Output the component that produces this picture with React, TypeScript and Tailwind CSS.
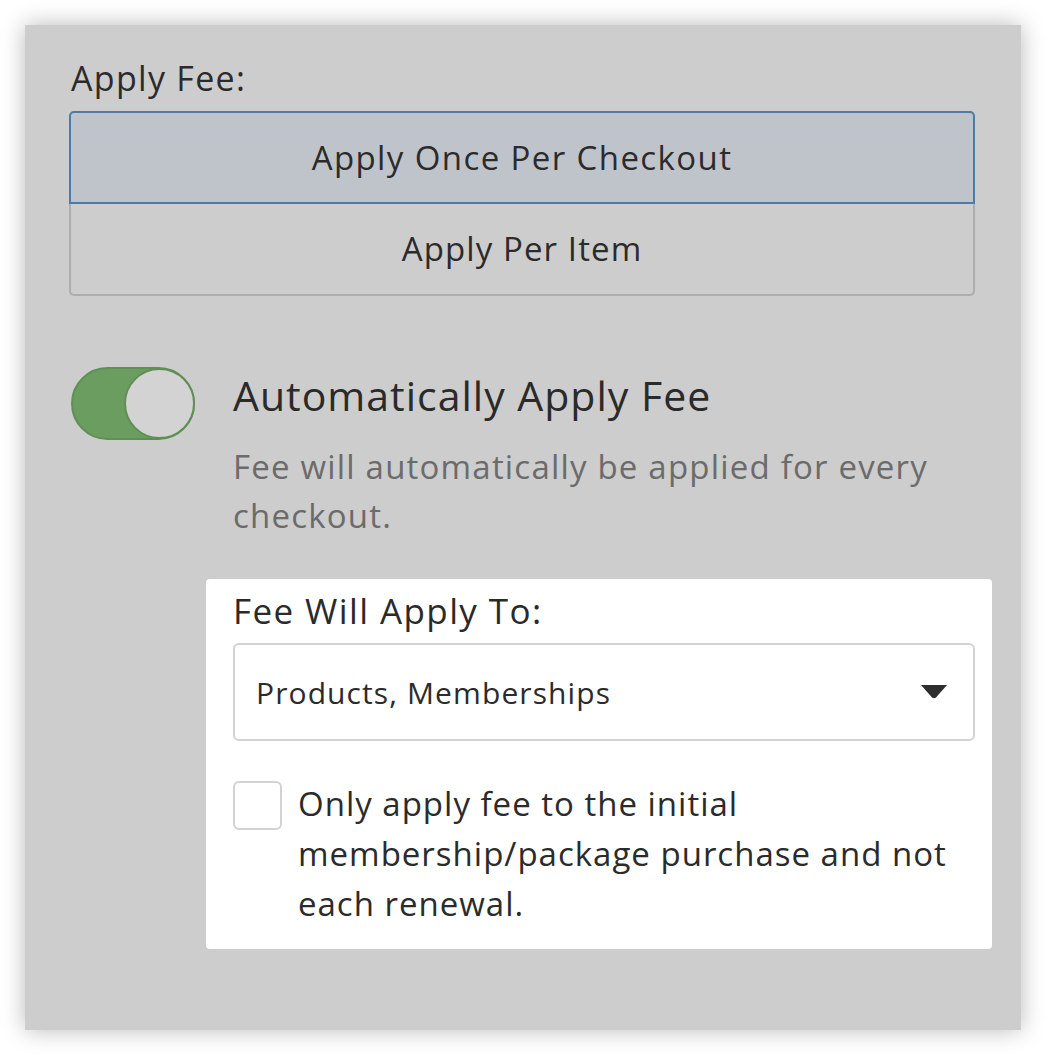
import React from "react";

export default function App() {
  return (
    <div className="w-[1046px] h-[1056px] bg-white pt-[25px] pl-[25px] font-['Open_Sans',sans-serif]">
      <div className="w-[996px] h-[1005px] bg-[#cdcdcd] shadow-[0_0_22px_rgba(0,0,0,0.28)] pt-[33px] pl-[44px]">
        <div className="text-[34px] leading-[40px] tracking-[1.3px] text-[#2b2b2b] pl-[2px] whitespace-nowrap">Apply Fee:</div>
        <div className="mt-[13px] w-[906px] flex flex-col">
          <div className="h-[93px] flex items-center justify-center bg-[#bfc4cb] border-2 border-[#4f7aa3] rounded-t-[5px] text-[33px] tracking-[1.4px] text-[#2b2b2b] whitespace-nowrap">
            Apply Once Per Checkout
          </div>
          <div className="h-[92px] flex items-center justify-center border-2 border-t-0 border-[#adadad] rounded-b-[5px] text-[33px] tracking-[1.1px] text-[#2b2b2b] whitespace-nowrap">
            Apply Per Item
          </div>
        </div>

        <div className="mt-[71px] flex">
          <div className="w-[124px] h-[73px] ml-[2px] rounded-full bg-[#6b9d60] border-2 border-[#5f8f55] flex items-center justify-end shrink-0">
            <div className="w-[71px] h-[71px] rounded-full bg-[#d3d3d3] border-2 border-[#5f8f55] -mr-[2px]" />
          </div>
          <div className="ml-[38px] flex flex-col">
            <div className="text-[41px] leading-[60px] tracking-[1px] text-[#2a2a2a] -mt-[2px] whitespace-nowrap">Automatically Apply Fee</div>
            <div className="mt-[17px] text-[33px] leading-[49px] tracking-[1.2px] text-[#6b6b6b] whitespace-nowrap">
              Fee will automatically be applied for every
              <br />
              checkout.
            </div>
          </div>
        </div>

        <div className="mt-[39px] ml-[137px] w-[786px] h-[370px] bg-white rounded-[4px] pt-[11px] pl-[27px] pr-[17px]">
          <div className="text-[35px] leading-[42px] tracking-[1.4px] text-[#2a2a2a] whitespace-nowrap">Fee Will Apply To:</div>
          <div className="mt-[11px] h-[98px] border-2 border-[#d2d2d2] rounded-[6px] flex items-center justify-between pl-[21px] pr-[26px]">
            <span className="text-[30px] tracking-[1.1px] text-[#2b2b2b] whitespace-nowrap">Products, Memberships</span>
            <svg width="26" height="14" viewBox="0 0 26 14">
              <path d="M0 0 H26 L15 12.5 Q13 14 11 12.5 Z" fill="#2e2e2e" />
            </svg>
          </div>
          <div className="mt-[40px] flex">
            <div className="w-[49px] h-[49px] border-2 border-[#d2d2d2] rounded-[6px] shrink-0" />
            <div className="ml-[16px] -mt-[2px] text-[33px] leading-[50px] tracking-[1px] text-[#2b2b2b] whitespace-nowrap">
              Only apply fee to the initial
              <br />
              membership/package purchase and not
              <br />
              each renewal.
            </div>
          </div>
        </div>
      </div>
    </div>
  );
}
